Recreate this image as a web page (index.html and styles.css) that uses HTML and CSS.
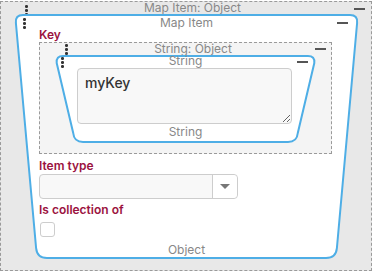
FILE: index.html
```html
<!DOCTYPE html>
<html lang="en">
<head>
    <meta charset="UTF-8">
    <meta name="viewport" content="width=device-width, initial-scale=1.0">
    <title>Map Item</title>
    <link rel="stylesheet" href="styles.css">
</head>
<body>
    <div class="object-box outer">
        <div class="box-head">
            <span class="grip"><i></i><i></i><i></i></span>
            <span class="box-title">Map Item: Object</span>
            <span class="minus"></span>
        </div>

        <div class="node map-node">
            <svg class="node-shape" width="345" height="245" viewBox="0 0 345 245">
                <path d="M9 1 L336 1 Q344 1 343.1 9 L322.9 234 Q322 244 312 244 L33 244 Q23 244 22.1 234 L1.9 9 Q1 1 9 1 Z"/>
            </svg>
            <div class="node-head">
                <span class="grip"><i></i><i></i><i></i></span>
                <span class="node-title">Map Item</span>
                <span class="minus"></span>
            </div>
            <div class="node-body">
                <div class="field-label">Key</div>
                <div class="object-box inner">
                    <div class="box-head">
                        <span class="grip"><i></i><i></i><i></i></span>
                        <span class="box-title">String: Object</span>
                        <span class="minus"></span>
                    </div>
                    <div class="node string-node">
                        <svg class="node-shape" width="261" height="88" viewBox="0 0 261 88">
                            <path d="M8 1 L253 1 Q260 1 259.3 8 L242.8 78 Q242 87 233 87 L28 87 Q19 87 18.2 78 L1.7 8 Q1 1 8 1 Z"/>
                        </svg>
                        <div class="node-head">
                            <span class="grip"><i></i><i></i><i></i></span>
                            <span class="node-title">String</span>
                            <span class="minus"></span>
                        </div>
                        <textarea class="text-input">myKey</textarea>
                        <div class="node-foot">String</div>
                    </div>
                </div>

                <div class="field-label">Item type</div>
                <div class="select">
                    <span class="select-value"></span>
                    <span class="select-arrow"></span>
                </div>

                <div class="field-label">Is collection of</div>
                <span class="checkbox"></span>
            </div>
            <div class="node-foot">Object</div>
        </div>
    </div>
</body>
</html>
```

FILE: styles.css
```css
body {
    margin: 0;
    overflow: hidden;
    font-family: Inter, "Liberation Sans", sans-serif;
    font-size: 12px;
    color: #333;
}
.object-box {
    position: relative;
    border: 1px dashed #9a9a9a;
    box-sizing: border-box;
}
.outer {
    margin-top: 1px;
    width: 372px;
    height: 270px;
    background-color: #e8e8e8;
    padding-left: 13px;
}
.inner {
    width: 293px;
    height: 112px;
    margin-top: 1px;
    background-color: #f4f4f4;
    padding-left: 15px;
}
.box-head, .node-head {
    position: relative;
    height: 12px;
    text-align: center;
    color: #888;
    line-height: 12px;
}
.inner > .box-head {
    line-height: 11px;
}
.grip {
    position: absolute;
    top: 1px;
    display: flex;
    flex-direction: column;
    gap: 1.5px;
}
.grip i {
    display: block;
    width: 2.5px;
    height: 2.5px;
    border-radius: 50%;
    background-color: #333;
}
.minus {
    position: absolute;
    top: 6px;
    width: 11px;
    height: 2px;
    background-color: #555;
}
.outer > .box-head .grip { left: 11px; top: 3px; }
.outer > .box-head .minus { right: 6px; }
.inner > .box-head .grip { left: 10px; top: 1px; }
.inner > .box-head .minus { right: 5px; top: 5px; }

.node {
    position: relative;
}
.node-shape {
    position: absolute;
    left: 0;
    top: 0;
}
.node-shape path {
    fill: #fff;
    stroke: #4eaee6;
    stroke-width: 2;
}
.node > * {
    position: relative;
}
.node > .node-shape {
    position: absolute;
}
.map-node {
    width: 345px;
    height: 245px;
}
.map-node > .node-head {
    padding-top: 3px;
}
.map-node > .node-head .grip { left: 9px; top: 4px; }
.map-node > .node-head .minus { right: 11px; top: 8px; }
.node-body {
    padding: 0 27px 0 25px;
}
.field-label {
    color: #9b1240;
    font-weight: 600;
    font-size: 12px;
    line-height: 12px;
}
.string-node {
    width: 261px;
    height: 88px;
}
.string-node > .node-head .grip { left: 6px; top: 2px; }
.string-node > .node-head .minus { right: 8px; top: 6px; }
.text-input {
    display: block;
    margin: 1px 0 0 22px;
    width: 215px;
    height: 56px;
    box-sizing: border-box;
    border: 1px solid #cdcdcd;
    border-radius: 4px;
    background-color: #f8f8f8;
    font-family: inherit;
    font-size: 14px;
    font-weight: 500;
    color: #333;
    padding: 5px 7px;
    resize: vertical;
}
.node-foot {
    text-align: center;
    color: #888;
    line-height: 12px;
    padding-top: 2px;
}
.map-node > .node-foot {
    position: absolute;
    left: 0;
    right: 0;
    bottom: 3px;
}
.inner + .field-label {
    margin-top: 6px;
}
.select {
    display: flex;
    width: 199px;
    height: 25px;
    margin-top: 2px;
    box-sizing: border-box;
    border: 1px solid #cdcdcd;
    border-radius: 4px;
    background-color: #f8f8f8;
}
.select-value {
    flex: 1;
}
.select-arrow {
    width: 24px;
    border-left: 1px solid #cdcdcd;
    background-color: #fff;
    border-radius: 0 4px 4px 0;
    display: flex;
    align-items: center;
    justify-content: center;
}
.select-arrow::after {
    content: "";
    border-left: 5px solid transparent;
    border-right: 5px solid transparent;
    border-top: 5px solid #777;
}
.select + .field-label {
    margin-top: 5px;
}
.checkbox {
    display: block;
    width: 15px;
    height: 15px;
    margin: 6px 0 0 1px;
    box-sizing: border-box;
    border: 1px solid #cdcdcd;
    border-radius: 3px;
    background-color: #fff;
}
```
